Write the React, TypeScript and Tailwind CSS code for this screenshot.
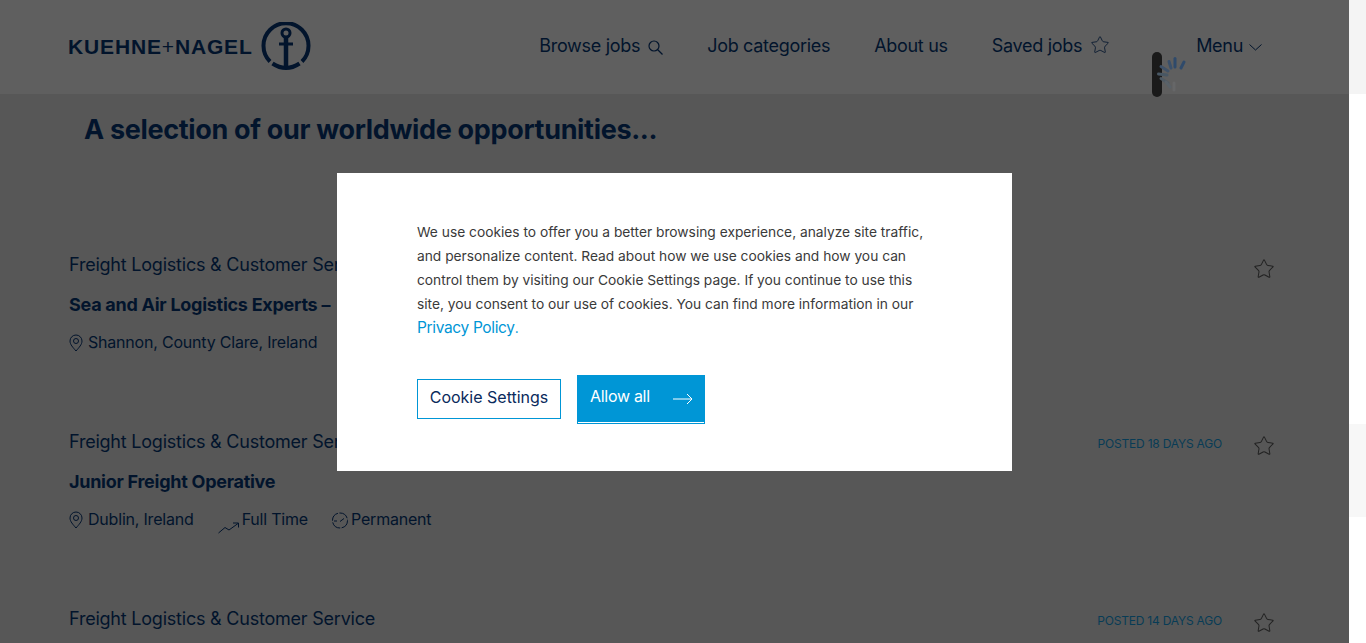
import React from 'react';
import { Star } from 'lucide-react';

const navy = 'text-[#02142c]';

const Logo = () => (
  <div className="-ml-[1px] flex items-center gap-[8px]">
    <span className="-mt-[2px] text-[21px] font-bold leading-none tracking-[0.85px] text-[#02142c] [font-family:'Liberation_Sans',sans-serif]">
      KUEHNE<span className="font-normal">+</span>NAGEL
    </span>
    <svg width="50" height="50" viewBox="0 0 50 50" fill="none" stroke="#02142c" strokeWidth="4">
      <path d="M9 39.5A22.5 22.5 0 1 1 41 39.5" />
      <path d="M11.5 41.5Q25 50.5 38.5 41.5" />
      <circle cx="25" cy="11" r="4" strokeWidth="3" />
      <path d="M25 15V44" strokeWidth="4.5" />
      <path d="M18 22H32" strokeWidth="3" />
    </svg>
  </div>
);

const PinIcon = () => (
  <svg width="14" height="18" viewBox="0 0 14 18" fill="none" stroke="#02142c" strokeWidth="1" className="mt-[3px] mr-[5px]">
    <path d="M7 17C4 13.5 1 10.5 1 7A6 6 0 0 1 13 7C13 10.5 10 13.5 7 17Z" />
    <circle cx="7" cy="7" r="2.5" />
  </svg>
);

const TrendIcon = () => (
  <svg width="21" height="12" viewBox="0 0 21 12" fill="none" stroke="#02142c" strokeWidth="1" className="mt-[14px]">
    <path d="M0.5 11L7 5.5L11 8L20 1.5M15 1H20.5V5.5" />
  </svg>
);

const ClockIcon = () => (
  <svg width="16" height="17" viewBox="0 0 16 17" fill="none" stroke="#02142c" strokeWidth="1" className="mt-[4px]">
    <circle cx="8" cy="8.5" r="7.5" strokeDasharray="10 1.5" />
    <path d="M8 9.5L12 6.5M2 9H5" />
  </svg>
);

const SearchIcon = () => (
  <svg width="15" height="15" viewBox="0 0 15 15" fill="none" stroke="#02142c" strokeWidth="1.2" className="mt-[3px]">
    <circle cx="6" cy="6" r="5" />
    <path d="M9.5 9.5L14.5 14.5" />
  </svg>
);

const JobRow = ({
  title,
  location,
  posted,
  extras,
}: {
  title: string;
  location: string;
  posted?: string;
  extras?: boolean;
}) => (
  <div className="h-[177px] pl-[69px] pr-[74px]">
    <div className="flex items-start justify-between">
      <p className={`text-[18px] leading-[24px] tracking-[-0.22px] ${navy}`}>Freight Logistics &amp; Customer Service</p>
      <div className="flex items-start gap-[31px]">
        {posted && <span className="mt-[6px] text-[12px] leading-[16px] tracking-[-0.2px] text-[#083c56]">{posted}</span>}
        <Star size={22} strokeWidth={1.1} className="mt-[5px] text-[#222]" />
      </div>
    </div>
    {title && <p className={`mt-[13px] text-[18px] font-bold leading-[24px] tracking-[-0.27px] ${navy}`}>{title}</p>}
    {location && (
      <div className={`mt-[14px] flex items-start text-[16px] leading-[22px] tracking-[-0.2px] ${navy}`}>
        <PinIcon />
        <span>{location}</span>
        {extras && (
          <>
            <span className="ml-[24px] mr-[3px] flex">
              <TrendIcon />
            </span>
            <span>Full Time</span>
            <span className="ml-[24px] mr-[3px] flex">
              <ClockIcon />
            </span>
            <span>Permanent</span>
          </>
        )}
      </div>
    )}
  </div>
);

export default function App() {
  return (
    <div className="relative flex h-[643px] overflow-hidden bg-white [font-family:Inter,sans-serif]">
      <div className="w-[1349px] shrink-0 bg-[#575757]">
        <header className="flex h-[94px] items-center bg-[#5f5f5f] pl-[69px] pr-[87px]">
          <Logo />
          <nav className={`-mt-[3px] ml-auto flex items-center text-[18px] tracking-[-0.3px] ${navy}`}>
            <span className="flex items-center gap-[8px]">
              Browse jobs <SearchIcon />
            </span>
            <span className="ml-[44px]">Job categories</span>
            <span className="ml-[44px]">About us</span>
            <span className="ml-[44px] flex items-center gap-[8px]">
              Saved jobs <Star size={20} strokeWidth={1} className="-mt-[1px] -mr-[1px]" />
            </span>
            <span className="ml-[87px] flex items-center gap-[6px]">
              Menu
              <svg width="13" height="7" viewBox="0 0 13 7" fill="none" stroke="#02142c" strokeWidth="1" className="mt-[3px]">
                <path d="M0.5 0.5L6.5 6L12.5 0.5" />
              </svg>
            </span>
          </nav>
        </header>
        <h1 className="mt-[16px] ml-[84px] text-[27px] font-bold leading-[40px] tracking-[-0.33px] text-[#02142c]">
          A selection of our worldwide opportunities...
        </h1>
        <div className="mt-[103px]">
          <JobRow title="Sea and Air Logistics Experts –" location="Shannon, County Clare, Ireland" />
          <JobRow title="Junior Freight Operative" location="Dublin, Ireland" posted="POSTED 18 DAYS AGO" extras />
          <JobRow title="" location="" posted="POSTED 14 DAYS AGO" />
        </div>
      </div>
      <div className="flex w-[17px] flex-col">
        <div className="h-[94px] bg-[#f4f4f4]" />
        <div className="mt-[330px] h-[93px] bg-[#f7f7f7]" />
      </div>

      {/* loading spinner over the header */}
      <div className="absolute left-[1152px] top-[52px] h-[45px] w-[10px] rounded-full bg-[#1a1a1a]" />
      <svg className="absolute left-[1156px] top-[56px]" width="32" height="36" viewBox="0 0 32 36" fill="none" strokeWidth="3" strokeLinecap="round">
        <path d="M28 6L25 12" stroke="#2f4a6b" />
        <path d="M19 2.5V11" stroke="#2f4a6b" />
        <path d="M13 5.5L15 12" stroke="#3a506b" />
        <path d="M5 10.5L12 15" stroke="#3f5269" />
        <path d="M2.5 18L11 19" stroke="#485764" />
        <path d="M5 22.5L12 27" stroke="#4f5a64" />
        <path d="M10 26L14 31" stroke="#596168" />
        <path d="M18 27V34" stroke="#666768" />
      </svg>

      {/* cookie dialog */}
      <div className="absolute left-[337px] top-[173px] h-[298px] w-[675px] bg-white pl-[80px] pr-[84px] pt-[47px]">
        <p className="text-[13.78px] leading-[24px] text-[#3a3a3a]">
          We use cookies to offer you a better browsing experience, analyze site traffic, and personalize content. Read
          about how we use cookies and how you can control them by visiting our Cookie Settings page. If you continue to
          use this site, you consent to our use of cookies. You can find more information in our{' '}
          <span className="text-[15.5px] tracking-[-0.35px] text-[#0096d6]">Privacy Policy</span>
          <span className="text-[#0096d6]">.</span>
        </p>
        <div className="mt-[35px] flex items-start gap-[16px]">
          <button className="mt-[4px] h-[40px] w-[144px] border border-[#0096d6] pb-[4px] text-[16px] text-[#0a2a5c]">
            Cookie Settings
          </button>
          <button className="flex h-[49px] w-[128px] items-start justify-between border border-[#0096d6] bg-[#0096d6] pl-[12px] pr-[11px] pt-[8px] text-[16px] leading-[24px] tracking-[-0.3px] text-white shadow-[inset_0_-1px_0_#fff]">
            Allow all
            <svg width="20" height="12" viewBox="0 0 20 12" fill="none" stroke="#fff" strokeWidth="1" className="mt-[9px]">
              <path d="M0 6H19M14 1L19 6L14 11" />
            </svg>
          </button>
        </div>
      </div>
    </div>
  );
}
